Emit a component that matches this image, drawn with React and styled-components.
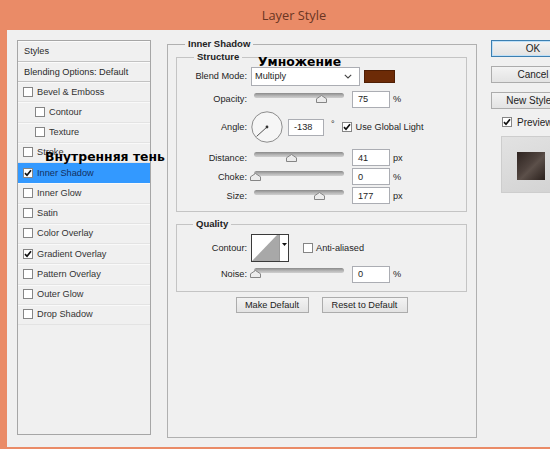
import React from 'react';
import styled, { createGlobalStyle } from 'styled-components';

const Global = createGlobalStyle`
  html, body { margin: 0; padding: 0; width: 550px; height: 449px; overflow: hidden; background: #ea8b67; }
  body { font-family: "Liberation Sans", Arial, sans-serif; }
  *, *::before, *::after { box-sizing: border-box; }
`;

const Window = styled.div`
  position: relative;
  width: 550px;
  height: 449px;
  background: #ea8b67;
  display: flex;
  flex-direction: column;
`;

const TitleBar = styled.div`
  flex: none;
  height: 30px;
  display: flex;
  align-items: center;
  justify-content: center;
  padding-left: 38px;
  font-family: "Open Sans", "Liberation Sans", sans-serif;
  font-size: 12.8px;
  color: #6a3523;
`;

const Client = styled.div`
  flex: 1;
  margin: 0 0 2px 7px;
  background: #f0f0f0;
  display: flex;
  align-items: flex-start;
  padding: 10px 0 0 10px;
  font-size: 9.2px;
  color: #1e1e1e;
`;

/* ---------- left styles list ---------- */
const StylesPanel = styled.div`
  flex: none;
  width: 134px;
  height: 395px;
  border: 1px solid #a6a6a6;
  display: flex;
  flex-direction: column;
`;

const PanelHeader = styled.div`
  height: ${p => p.$h}px;
  display: flex;
  align-items: center;
  padding-left: 6px;
  border-bottom: 1px solid #c2c2c2;
  box-shadow: inset 0 1px 0 #fbfbfb;
  color: #2a2a2a;
`;

const ListRow = styled.div`
  height: 20.25px;
  display: flex;
  align-items: center;
  gap: 4px;
  padding-left: ${p => (p.$indent ? 17 : 5)}px;
  background: ${p => (p.$selected ? '#3399ff' : 'transparent')};
  color: ${p => (p.$selected ? '#12305f' : '#333')};
  border-bottom: 1px solid ${p => (p.$selected ? '#3399ff' : '#e3e3e3')};
  box-shadow: ${p => (p.$selected ? 'none' : 'inset 0 1px 0 #f9f9f9')};
`;

const Box = styled.span`
  flex: none;
  width: 10px;
  height: 10px;
  border: 1px solid #858585;
  background: #fff;
  display: inline-flex;
  align-items: center;
  justify-content: center;
`;

const Check = ({ checked }) => (
  <Box>
    {checked && (
      <svg width="8" height="8" viewBox="0 0 8 8">
        <path d="M1 4.2 L3 6.3 L7 1.3" fill="none" stroke="#111" strokeWidth="1.7" />
      </svg>
    )}
  </Box>
);

/* ---------- group boxes ---------- */
const Group = styled.fieldset`
  margin: ${p => p.$m};
  padding: ${p => p.$pad};
  width: ${p => p.$w}px;
  height: ${p => (p.$h ? `${p.$h}px` : 'auto')};
  min-width: 0;
  border: 1px solid ${p => p.$line};
  flex: none;
`;

const Legend = styled.legend`
  margin-left: ${p => p.$ml}px;
  padding: 0 3px;
  font-weight: bold;
  font-size: 9.5px;
  line-height: 10px;
  color: #222;
`;

const Row = styled.div`
  display: flex;
  align-items: center;
  height: ${p => p.$h}px;
  margin-top: ${p => p.$mt || 0}px;
`;

const FieldLabel = styled.span`
  flex: none;
  width: 70px;
  text-align: right;
  margin-right: 4px;
`;

const SelectBox = styled.div`
  width: 109px;
  height: 19px;
  background: #fff;
  border: 1px solid #abadb3;
  display: flex;
  align-items: center;
  justify-content: space-between;
  padding: 0 7px 0 3px;
`;

const Swatch = styled.div`
  width: 31px;
  height: 13px;
  margin-left: 4px;
  background: ${p => p.$c};
  border: 1px solid #4f1e04;
`;

const SliderWrap = styled.div`
  position: relative;
  flex: none;
  width: 90px;
  height: 14px;
  margin-left: 3px;
`;

const Track = styled.div`
  position: absolute;
  left: 0;
  right: 0;
  top: 1px;
  height: 5px;
  border-radius: 3px;
  background: linear-gradient(#8a8a8a, #b9b9b9 60%, #cfcfcf);
`;

const Thumb = styled.svg`
  position: absolute;
  top: 3px;
`;

const Slider = ({ frac }) => (
  <SliderWrap>
    <Track />
    <Thumb width="11" height="8" viewBox="0 0 11 8" style={{ left: `${frac * 90 - 5.5}px` }}>
      <polygon points="0.5,7.5 0.5,3.8 5.5,0.5 10.5,3.8 10.5,7.5" fill="#ececec" stroke="#858585" />
    </Thumb>
  </SliderWrap>
);

const NumInput = styled.div`
  flex: none;
  width: ${p => p.$w || 38}px;
  height: 17px;
  margin-left: ${p => p.$ml}px;
  background: #fff;
  border: 1px solid #abadb3;
  display: flex;
  align-items: center;
  padding-left: 5px;
`;

const Unit = styled.span`
  margin-left: ${p => p.$ml || 3}px;
`;

const Degree = styled.span`
  margin: -6px 0 0 7px;
  font-size: 9px;
`;

const CheckLabel = styled.label`
  display: flex;
  align-items: center;
  gap: ${p => p.$gap}px;
  margin-left: ${p => p.$ml}px;
`;

const ContourThumb = styled.div`
  display: flex;
  height: 28px;
  border: 1px solid #3a3a3a;
  background: #fff;
`;

const ContourArrow = styled.div`
  width: 9px;
  border-left: 1px solid #9a9a9a;
  display: flex;
  align-items: center;
  justify-content: center;
  padding-bottom: 8px;
`;

const ButtonRow = styled.div`
  display: flex;
  justify-content: center;
  gap: 13px;
  margin-top: 5px;
`;

const Button = styled.div`
  width: ${p => p.$w}px;
  height: ${p => p.$h}px;
  display: flex;
  align-items: center;
  justify-content: center;
  white-space: nowrap;
  font-size: ${p => p.$fs}px;
  color: #222;
  border: 1px solid ${p => (p.$default ? '#3c7fb1' : '#acacac')};
  box-shadow: ${p => (p.$default ? 'inset 0 0 0 1px #bfe0f8' : 'none')};
  background: linear-gradient(#f3f3f3, #e3e3e3);
  flex: none;
`;

/* ---------- right column ---------- */
const RightColumn = styled.div`
  flex: none;
  margin-left: 14px;
  display: flex;
  flex-direction: column;
  gap: 9px;
  width: 84px;
`;

const PreviewRow = styled.div`
  display: flex;
  align-items: center;
  gap: 5px;
  height: 12px;
  margin-top: -2px;
  padding-left: 11px;
  font-size: 10px;
`;

const PreviewBox = styled.div`
  margin: -1px 0 0 10px;
  width: 60px;
  height: 57px;
  background: linear-gradient(160deg, #e2e2e2, #d3d3d3);
  border: 1px solid #cdcdcd;
  padding: 15px 0 0 15px;
`;

const PreviewSquare = styled.div`
  width: 28px;
  height: 28px;
  background: linear-gradient(135deg, #2e2420 0%, #4f433e 45%, #5c504a 55%, #2a201c 100%);
`;

const Note = styled.div`
  position: absolute;
  left: ${p => p.$x}px;
  top: ${p => p.$y}px;
  font-family: "DejaVu Sans", sans-serif;
  font-weight: bold;
  font-size: 12.4px;
  line-height: 14px;
  color: #000;
  white-space: nowrap;
`;

const effects = [
  { label: 'Bevel & Emboss' },
  { label: 'Contour', indent: true },
  { label: 'Texture', indent: true },
  { label: 'Stroke' },
  { label: 'Inner Shadow', checked: true, selected: true },
  { label: 'Inner Glow' },
  { label: 'Satin' },
  { label: 'Color Overlay' },
  { label: 'Gradient Overlay', checked: true },
  { label: 'Pattern Overlay' },
  { label: 'Outer Glow' },
  { label: 'Drop Shadow' },
];

export default function App() {
  return (
    <Window>
      <Global />
      <TitleBar>Layer Style</TitleBar>
      <Client>
        <StylesPanel>
          <PanelHeader $h={21}>Styles</PanelHeader>
          <PanelHeader $h={20}>Blending Options: Default</PanelHeader>
          {effects.map(e => (
            <ListRow key={e.label} $indent={e.indent} $selected={e.selected}>
              <Check checked={e.checked} />
              <span>{e.label}</span>
            </ListRow>
          ))}
        </StylesPanel>

        <Group $m="-1px 0 0 16px" $pad="0 9px 0 8px" $w={310} $h={399} $line="#b0b0b0">
          <Legend $ml={9}>Inner Shadow</Legend>

          <Group $m="3px 0 0 0" $pad="4px 0 6px 0" $w={291} $line="#c4c4c4">
            <Legend $ml={17}>Structure</Legend>
            <Row $h={20}>
              <FieldLabel>Blend Mode:</FieldLabel>
              <SelectBox>
                <span>Multiply</span>
                <svg width="8" height="5" viewBox="0 0 8 5">
                  <path d="M0.8 0.8 L4 4 L7.2 0.8" fill="none" stroke="#444" strokeWidth="1.1" />
                </svg>
              </SelectBox>
              <Swatch $c="#6d2b07" />
            </Row>
            <Row $h={20} $mt={3}>
              <FieldLabel>Opacity:</FieldLabel>
              <Slider frac={0.755} />
              <NumInput $ml={8}>75</NumInput>
              <Unit>%</Unit>
            </Row>
            <Row $h={30} $mt={3}>
              <FieldLabel>Angle:</FieldLabel>
              <svg width="32" height="32" viewBox="0 0 32 32">
                <circle cx="16" cy="16" r="15.2" fill="#f6f6f6" stroke="#8c8c8c" />
                <line x1="16" y1="16" x2="5.6" y2="25.4" stroke="#555" strokeWidth="1" />
                <circle cx="16" cy="16" r="1.4" fill="#333" />
              </svg>
              <NumInput $ml={5} $w={36}>-138</NumInput>
              <Degree>°</Degree>
              <CheckLabel $ml={7} $gap={4}>
                <Check checked />
                <span>Use Global Light</span>
              </CheckLabel>
            </Row>
            <Row $h={19} $mt={6}>
              <FieldLabel>Distance:</FieldLabel>
              <Slider frac={0.42} />
              <NumInput $ml={8}>41</NumInput>
              <Unit>px</Unit>
            </Row>
            <Row $h={19}>
              <FieldLabel>Choke:</FieldLabel>
              <Slider frac={0.012} />
              <NumInput $ml={8}>0</NumInput>
              <Unit>%</Unit>
            </Row>
            <Row $h={19}>
              <FieldLabel>Size:</FieldLabel>
              <Slider frac={0.733} />
              <NumInput $ml={8}>177</NumInput>
              <Unit>px</Unit>
            </Row>
          </Group>

          <Group $m="7px 0 0 0" $pad="0 0 7px 0" $w={291} $line="#c4c4c4">
            <Legend $ml={16}>Quality</Legend>
            <Row $h={30} $mt={4}>
              <FieldLabel>Contour:</FieldLabel>
              <ContourThumb>
                <svg width="27" height="26" viewBox="0 0 27 26">
                  <polygon points="0,26 25,0 27,0 27,26" fill="#a8a8a8" />
                </svg>
                <ContourArrow>
                  <svg width="5" height="3" viewBox="0 0 5 3">
                    <polygon points="0,0 5,0 2.5,3" fill="#111" />
                  </svg>
                </ContourArrow>
              </ContourThumb>
              <CheckLabel $ml={14} $gap={3}>
                <Check />
                <span>Anti-aliased</span>
              </CheckLabel>
            </Row>
            <Row $h={20} $mt={1}>
              <FieldLabel>Noise:</FieldLabel>
              <Slider frac={0.012} />
              <NumInput $ml={8}>0</NumInput>
              <Unit>%</Unit>
            </Row>
          </Group>

          <ButtonRow>
            <Button $w={73} $h={16} $fs={9.2}>Make Default</Button>
            <Button $w={86} $h={16} $fs={9.2}>Reset to Default</Button>
          </ButtonRow>
        </Group>

        <RightColumn>
          <Button $w={84} $h={17} $fs={10} $default>OK</Button>
          <Button $w={84} $h={17} $fs={10}>Cancel</Button>
          <Button $w={84} $h={17} $fs={10}>New Style...</Button>
          <PreviewRow>
            <Check checked />
            <span>Preview</span>
          </PreviewRow>
          <PreviewBox>
            <PreviewSquare />
          </PreviewBox>
        </RightColumn>
      </Client>

      <Note $x={258} $y={55}>Умножение</Note>
      <Note $x={45} $y={150}>Внутренняя тень</Note>
    </Window>
  );
}
